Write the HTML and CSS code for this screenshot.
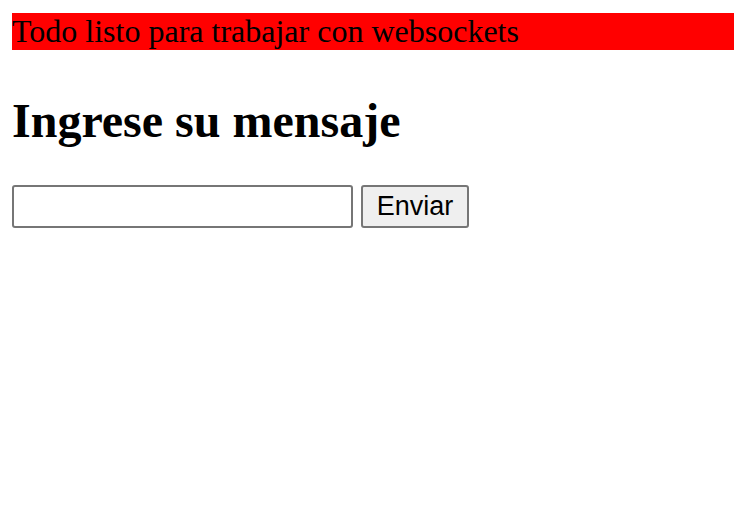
FILE: index.html
```html
<!DOCTYPE html>
<html lang="es">
<head>
<meta charset="utf-8">
<title>Websockets</title>
<link rel="stylesheet" href="styles.css">
</head>
<body>
<div class="status">Todo listo para trabajar con websockets</div>
<h1 class="title">Ingrese su mensaje</h1>
<form class="form">
<input class="field" type="text">
<button class="send" type="button">Enviar</button>
</form>
</body>
</html>
```
FILE: styles.css
```css
html, body {
  margin: 0;
  padding: 0;
  background: #fff;
}
body {
  padding: 13px 0 0 12px;
  font-family: "Liberation Serif", "Times New Roman", serif;
  color: #000;
}
.status {
  background: #ff0000;
  font-size: 32px;
  line-height: 37px;
  height: 37px;
}
.title {
  font-size: 48px;
  font-weight: bold;
  margin: 35px 0 0 0;
  line-height: 72px;
}
.form {
  display: flex;
  align-items: center;
  gap: 8px;
  margin-top: 28px;
}
.field {
  box-sizing: border-box;
  width: 341px;
  height: 43px;
  margin: 0;
  border: 2px solid #767676;
  border-radius: 3px;
  background: #fff;
  font-size: 24px;
  padding: 0 3px;
}
.send {
  box-sizing: border-box;
  width: 108px;
  height: 43px;
  margin: 0;
  border: 2px solid #767676;
  border-radius: 3px;
  background: #efefef;
  font-family: "Liberation Sans", Arial, sans-serif;
  font-size: 27px;
  padding: 0;
  color: #000;
}
```
